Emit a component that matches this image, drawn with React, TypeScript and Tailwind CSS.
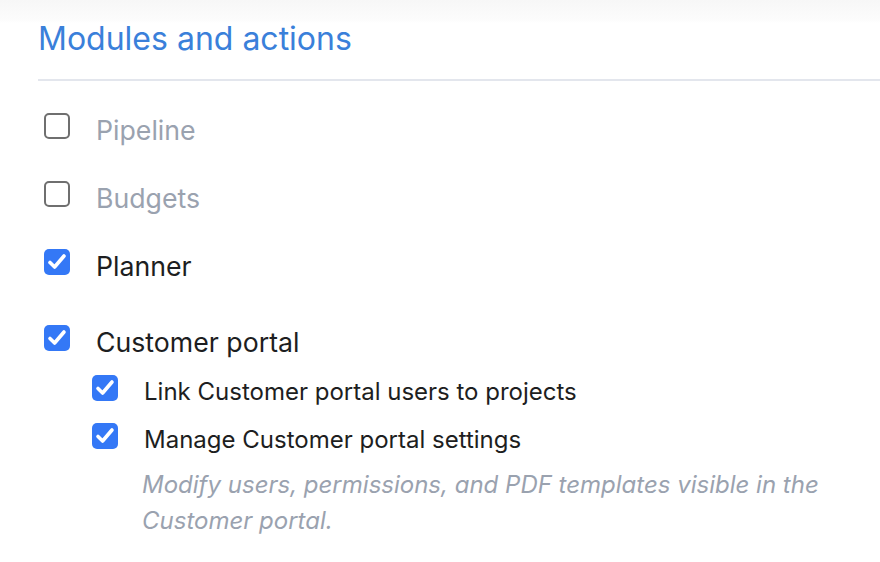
import React from "react";

function Box({ checked }: { checked: boolean }) {
  if (checked) {
    return (
      <div className="w-[26px] h-[26px] shrink-0 rounded-[5px] bg-[#3478f6] flex items-center justify-center">
        <svg width="26" height="26" viewBox="0 0 26 26" fill="none">
          <path d="M6 13.5 L10.6 18 L20 7" stroke="#fff" strokeWidth="3.6" strokeLinecap="round" strokeLinejoin="round" />
        </svg>
      </div>
    );
  }
  return <div className="w-[26px] h-[26px] shrink-0 rounded-[5px] border-2 border-[#6f6f6f] bg-white" />;
}

function Row({ label, checked, muted }: { label: string; checked: boolean; muted?: boolean }) {
  return (
    <div className="flex items-center h-[68px] ml-[6px]">
      <Box checked={checked} />
      <span className={`ml-[26px] mt-[7px] text-[26.7px] leading-[32px] ${muted ? "text-[#9aa2af]" : "text-[#1d1e21]"}`}>{label}</span>
    </div>
  );
}

function SubRow({ label }: { label: string }) {
  return (
    <div className="flex items-center h-[48px] ml-[54px]">
      <Box checked={true} />
      <span className="ml-[26px] mt-[8px] text-[24px] leading-[30px] text-[#1d1e21]">{label}</span>
    </div>
  );
}

export default function App() {
  return (
    <div
      className="w-[880px] h-[562px] overflow-hidden bg-[linear-gradient(#f7f7f7,#fcfcfc_20px,#ffffff_23px)] pl-[38px] pt-[20px]"
      style={{ fontFamily: "Inter, 'Noto Sans', sans-serif" }}
    >
      <h1 className="text-[32px] leading-[38px] text-[#3a80da]">Modules and actions</h1>
      <div className="mt-[21px] h-[2px] bg-[#e3e6ed]" />
      <div className="mt-[11px] flex flex-col">
        <Row label="Pipeline" checked={false} muted />
        <Row label="Budgets" checked={false} muted />
        <Row label="Planner" checked={true} />
        <div className="flex items-center h-[52px] ml-[6px] mt-4">
          <Box checked={true} />
          <span className="ml-[26px] mt-[7px] text-[26.7px] leading-[32px] text-[#1d1e21]">Customer portal</span>
        </div>
        <SubRow label="Link Customer portal users to projects" />
        <SubRow label="Manage Customer portal settings" />
        <p className="ml-[104px] mt-[7px] w-[700px] text-[24px] leading-[36px] italic text-[#9aa2af]">
          Modify users, permissions, and PDF templates visible in the Customer portal.
        </p>
      </div>
    </div>
  );
}
